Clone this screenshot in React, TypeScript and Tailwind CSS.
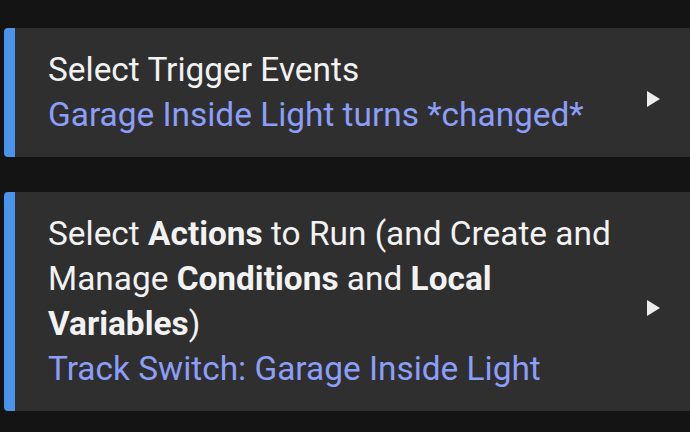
import React from "react";

interface SectionCardProps {
  title: React.ReactNode;
  summary: string;
}

function Arrow() {
  return (
    <svg
      width="15"
      height="18"
      viewBox="0 0 15 18"
      className="mt-[14px] shrink-0"
      aria-hidden
    >
      <path d="M1 1 L14 9 L1 17 Z" fill="#ededed" />
    </svg>
  );
}

function SectionCard({ title, summary }: SectionCardProps) {
  return (
    <div className="flex items-center rounded-l-[4px] border-l-[11px] border-[#4a94ec] bg-[#2f2f2f] pt-[19px] pb-[20px] pl-[33px] pr-[29px]">
      <div className="w-[582px] text-[33.4px] leading-[45px]">
        <div className="text-[#f2f2f2]">{title}</div>
        <div className="text-[#8c9ef8]">{summary}</div>
      </div>
      <div className="flex flex-1 justify-end">
        <Arrow />
      </div>
    </div>
  );
}

export default function App() {
  return (
    <div
      className="flex h-[432px] w-[690px] flex-col gap-[35px] overflow-hidden bg-[#141414] pl-[4px] pt-[28px]"
      style={{ fontFamily: "Roboto, 'Noto Sans', sans-serif" }}
    >
      <SectionCard
        title="Select Trigger Events"
        summary="Garage Inside Light turns *changed*"
      />
      <SectionCard
        title={
          <>
            Select <b className="font-bold">Actions</b> to Run (and Create and
            Manage <b className="font-bold">Conditions</b> and{" "}
            <b className="font-bold">Local Variables</b>)
          </>
        }
        summary="Track Switch: Garage Inside Light"
      />
    </div>
  );
}
